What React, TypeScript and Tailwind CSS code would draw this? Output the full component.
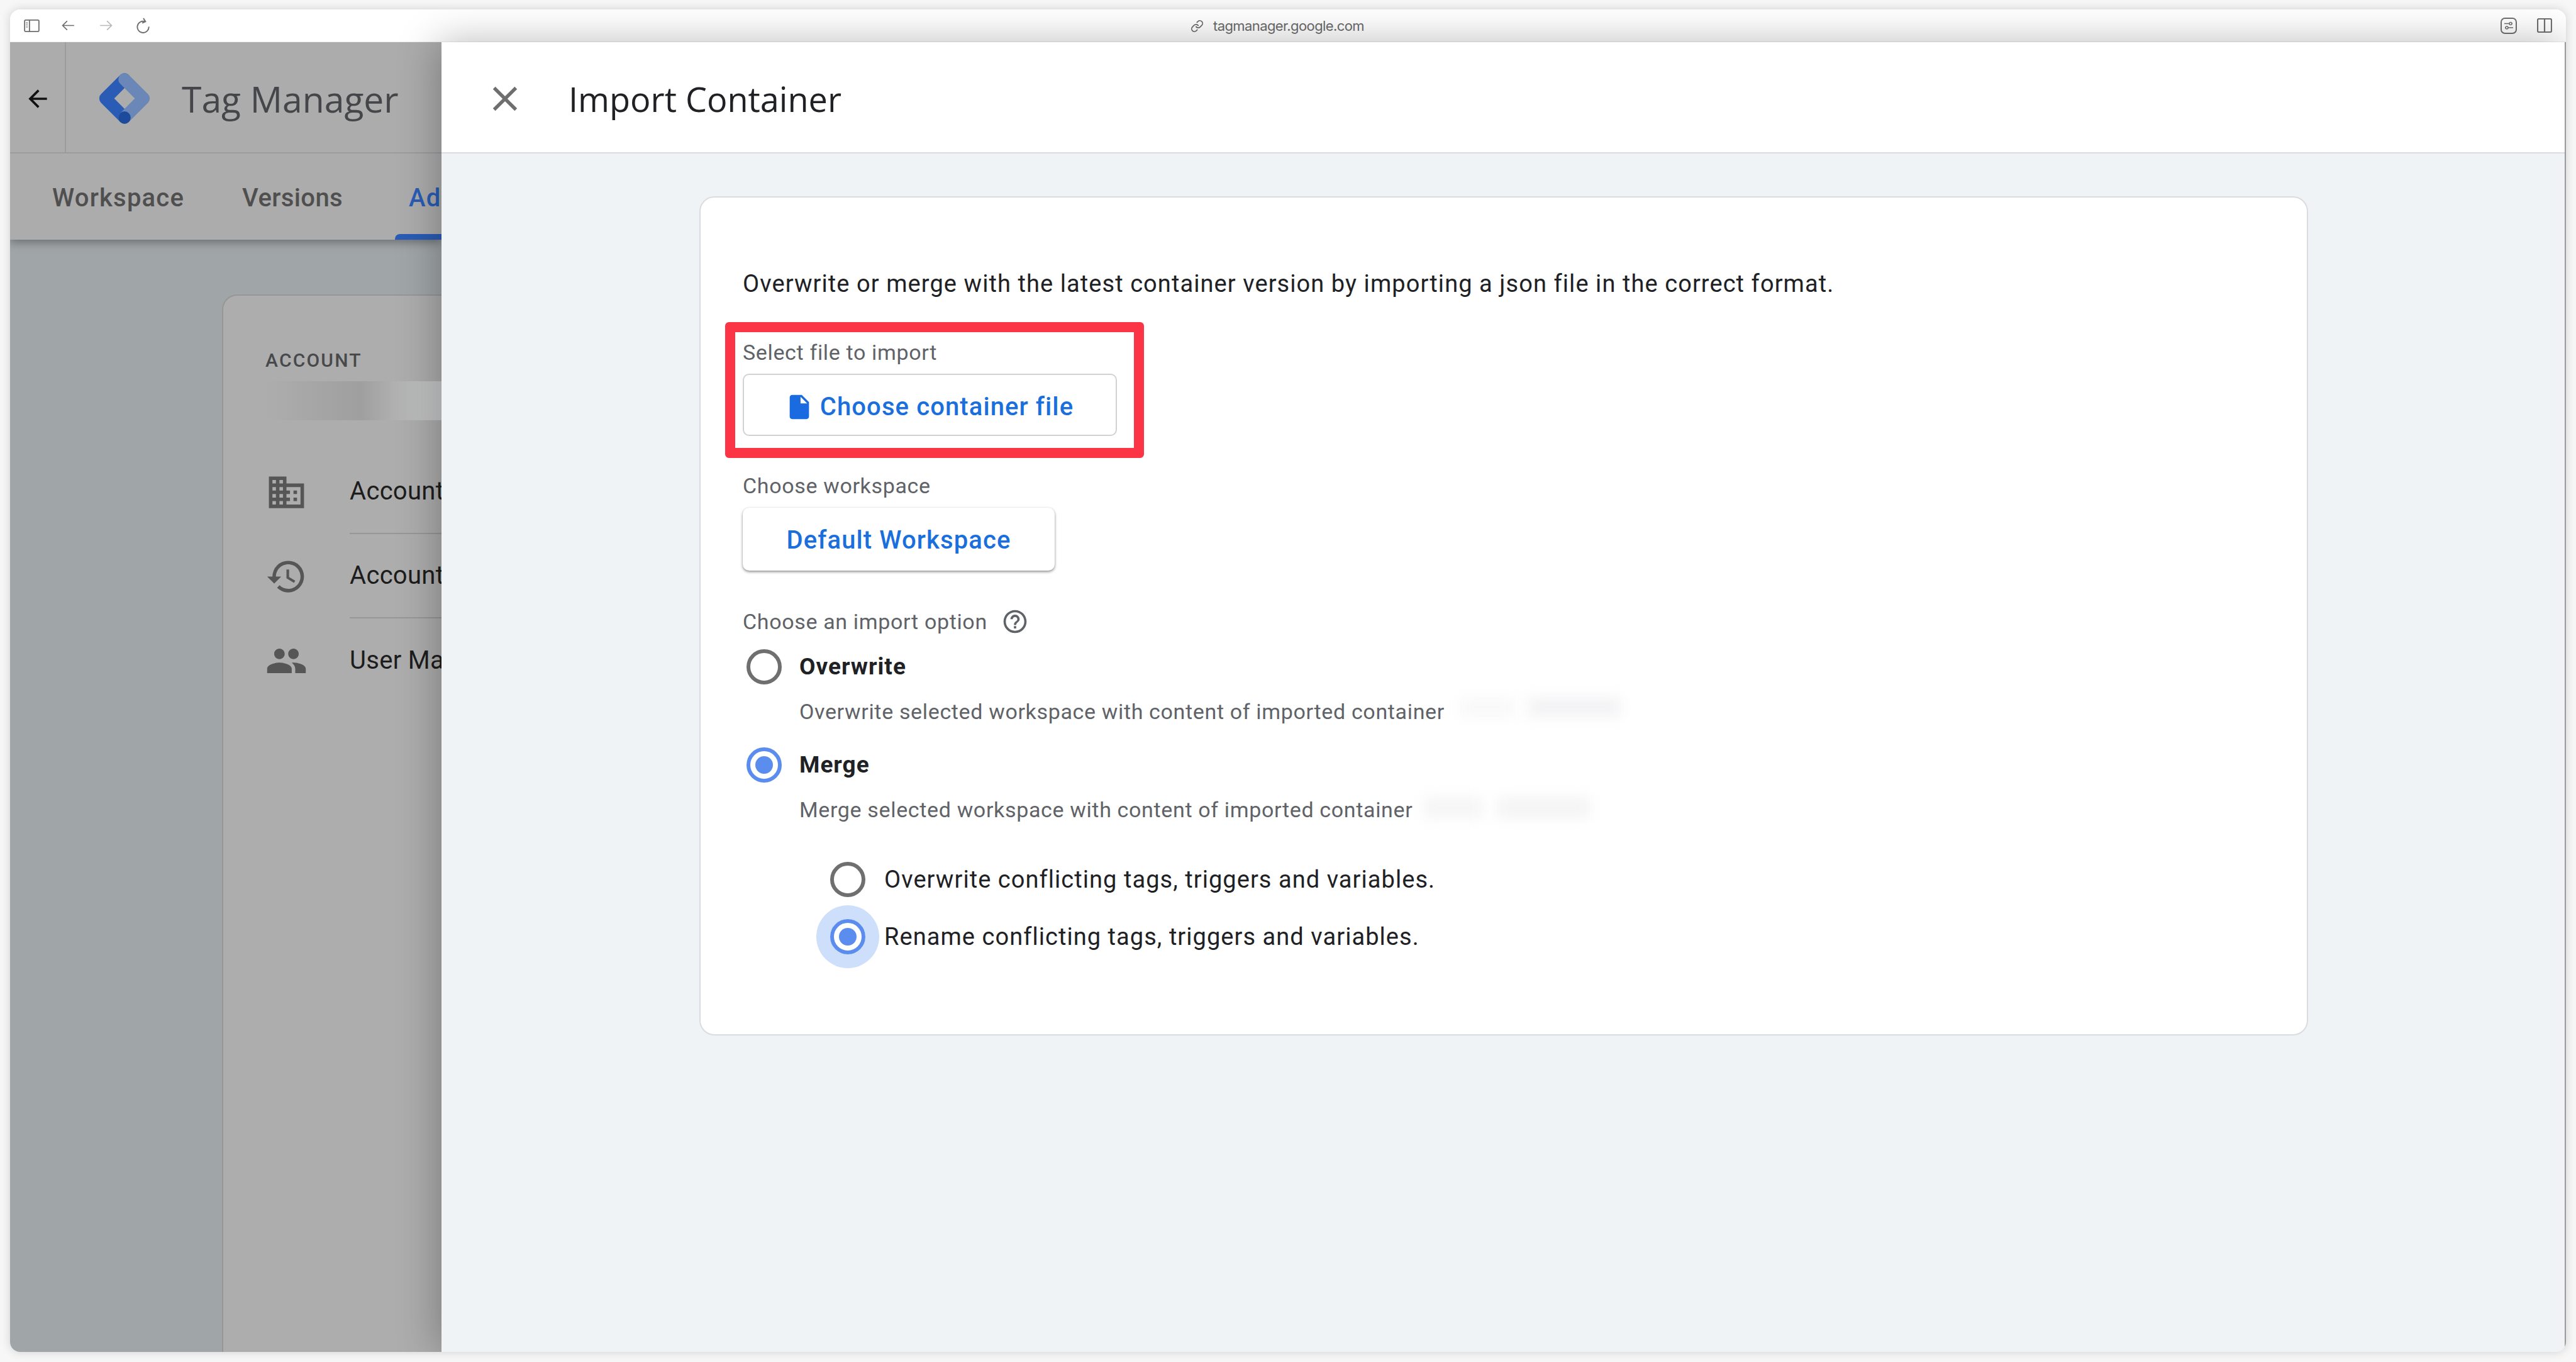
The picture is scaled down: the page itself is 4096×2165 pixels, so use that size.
import { Link as LinkIcon } from 'lucide-react'
import { MdArrowBack, MdClose, MdDomain, MdHelpOutline, MdHistory, MdInsertDriveFile, MdPeople } from 'react-icons/md'

const accountRows = [
  { label: 'Account Settings', Icon: MdDomain },
  { label: 'Account Activity', Icon: MdHistory },
  { label: 'User Management', Icon: MdPeople },
]

function BrowserBar() {
  return (
    <div className="flex h-[52px] shrink-0 items-center border-b border-[#efefef] bg-white">
      <div className="flex w-[900px] items-center text-[#6e6e6e]">
        <svg className="ml-[22px] h-[20px] w-[25px]" viewBox="0 0 27 22" fill="none" stroke="currentColor" strokeWidth="2">
          <rect x="1" y="1" width="25" height="20" rx="2" />
          <path d="M9.500 1v20" />
          <path d="M3.500 6h3M3.500 9.500h3M3.500 13h3" strokeWidth="1.500" />
        </svg>
        <svg className="ml-[35px] h-[17px] w-[21px]" viewBox="0 0 24 20" fill="none" stroke="currentColor" strokeWidth="2">
          <path d="M23 10H2M10 1.500 1.500 10 10 18.500" />
        </svg>
        <svg className="ml-[39px] h-[17px] w-[21px] text-[#b9b9b9]" viewBox="0 0 24 20" fill="none" stroke="currentColor" strokeWidth="2">
          <path d="M1 10h21M14 1.500 22.500 10 14 18.500" />
        </svg>
        <svg className="ml-[38px] h-[25px] w-[22px]" viewBox="0 0 22 26" fill="none" stroke="currentColor" strokeWidth="2">
          <path d="M13.500 6.500A9.500 9.500 0 1 0 20 15M11 1l3.500 5.500L9 9" />
        </svg>
      </div>
      <div className="ml-[977px] flex items-center pt-[1px] text-[#6b6b6b]">
        <LinkIcon className="h-[21px] w-[21px]" strokeWidth={2} />
        <span className="ml-[15px] font-['Inter',sans-serif] text-[22px] leading-none tracking-[-0.6px]">tagmanager.google.com</span>
      </div>
      <div className="ml-auto mr-[22px] flex items-center text-[#707070]">
        <svg className="h-[26px] w-[26px]" viewBox="0 0 26 26" fill="none" stroke="currentColor" strokeWidth="2">
          <rect x="1" y="1" width="24" height="24" rx="6" />
          <path d="M6 9.500h13M7 16h13" strokeWidth="1.500" />
          <circle cx="16" cy="9.500" r="2" fill="white" strokeWidth="1.500" />
          <circle cx="10" cy="16" r="2" fill="white" strokeWidth="1.500" />
        </svg>
        <svg className="ml-[32px] h-[23px] w-[24px]" viewBox="0 0 24 23" fill="none" stroke="currentColor" strokeWidth="2.200">
          <rect x="1" y="1" width="22" height="21" rx="2" />
          <path d="M12 1v21" />
        </svg>
      </div>
    </div>
  )
}

function TagManagerLogo() {
  return (
    <svg className="h-[83px] w-[82px]" viewBox="0 0 100 100" fill="none" strokeWidth="24" strokeLinecap="round" strokeLinejoin="round">
      <path d="M50 13 13 50 50 87" stroke="#2a5cb5" />
      <path d="M50 87 87 50 50 13" stroke="#6b87b7" />
      <circle cx="50" cy="87" r="12" fill="#1c4b9b" />
    </svg>
  )
}

function BackgroundPage() {
  return (
    <div className="flex w-[686px] shrink-0 flex-col overflow-hidden bg-[#a0a5a8]">
      <div className="relative z-10 shadow-[0_4px_14px_rgba(0,0,0,0.35)]">
        <div className="flex h-[177px] items-center border-b-[2px] border-[#9b9ba0] bg-[#acacac]">
          <div className="flex h-full w-[89px] shrink-0 items-center justify-center border-r-[2px] border-[#9b9ba0] pl-[1px] pt-[5px]">
            <MdArrowBack className="h-[44px] w-[44px] text-[#111]" />
          </div>
          <div className="ml-[52px] pt-[4px]"><TagManagerLogo /></div>
          <span className="ml-[50px] whitespace-nowrap pt-[5px] font-['Open_Sans',sans-serif] text-[57px] leading-none text-[#44464a]">Tag Manager</span>
        </div>
        <div className="flex h-[137px] bg-[#acacac] pl-[67px] font-['Roboto',sans-serif] text-[40px] font-medium tracking-[1.2px] text-[#4f4f4f]">
          <span className="self-center pt-[4px]">Workspace</span>
          <span className="ml-[92px] self-center pt-[4px] tracking-[0.4px]">Versions</span>
          <div className="relative ml-[105px] flex items-center pt-[4px] text-[#2a5cb5]">
            <span>Admin</span>
            <span className="absolute -left-[22px] -right-[22px] bottom-0 h-[9px] rounded-t-[8px] bg-[#2a5cb5]" />
          </div>
        </div>
      </div>
      <div className="ml-[337px] mt-[87px] flex-1 overflow-hidden rounded-tl-[24px] border-l-[2px] border-t-[2px] border-[#969696] bg-[#adadad] pl-[69px] pt-[85px] font-['Roboto',sans-serif]">
        <p className="-ml-[2px] text-[30px] font-medium leading-[36px] tracking-[2.2px] text-[#48494b]">ACCOUNT</p>
        <div className="mt-[15px] h-[62px] w-[300px] bg-gradient-to-r from-[#adadad] via-[#9f9f9f] to-[#cfd0d1]" />
        <div className="mt-[47px]">
          {accountRows.map(({ label, Icon }, i) => (
            <div key={label} className="flex h-[134px] items-center">
              <Icon className="-ml-[2px] h-[67px] w-[67px] shrink-0 text-[#565656]" />
              <div className={`ml-[67px] flex h-full flex-1 items-center pb-[1px] ${i < 2 ? 'border-b-[2px] border-[#979797]' : ''}`}>
                <span className="whitespace-nowrap text-[40px] tracking-[0.3px] text-[#1d1d1d]">{label}</span>
              </div>
            </div>
          ))}
        </div>
      </div>
    </div>
  )
}

function Radio({ checked }: { checked?: boolean }) {
  return (
    <span className={`flex h-[56px] w-[56px] shrink-0 items-center justify-center rounded-full border-[6px] ${checked ? 'border-[#5b8def]' : 'border-[#6f6f6f]'}`}>
      {checked && <span className="h-[28px] w-[28px] rounded-full bg-[#5b8def]" />}
    </span>
  )
}

function ImportPanel() {
  return (
    <div className="relative z-20 flex flex-1 flex-col border-r-[2px] border-[#9a9a9a] bg-[#eff3f6] shadow-[-6px_0_60px_rgba(0,0,0,0.28)]">
      <div className="flex h-[177px] shrink-0 items-center border-b-[2px] border-[#dadce0] bg-white pt-[5px]">
        <MdClose className="ml-[68px] h-[66px] w-[66px] text-[#6e6e6e]" />
        <h1 className="ml-[68px] font-['Open_Sans',sans-serif] text-[54px] leading-none text-[#202124]">Import Container</h1>
      </div>
      <div className="ml-[410px] mt-[68px] h-[1334px] w-[2558px] rounded-[24px] border-[2px] border-[#d9dde1] bg-white pl-[67px] font-['Roboto',sans-serif]">
        <p className="mt-[117px] text-[38px] leading-[40px] tracking-[1.07px] text-[#202124]">
          Overwrite or merge with the latest container version by importing a json file in the correct format.
        </p>

        <div className="relative">
          <p className="mt-[69px] text-[34px] leading-[40px] tracking-[0.65px] text-[#5f6368]">Select file to import</p>
          <div className="mt-[14px] flex h-[99px] w-[595px] items-center justify-center rounded-[10px] border-[2px] border-[#d2d2d2] pr-[2px] pt-[6px] text-[40px] font-medium tracking-[1.1px] text-[#1a6fdd]">
            <MdInsertDriveFile className="h-[46px] w-[46px] text-[#1a6bdf]" />
            <span className="ml-[10px]">Choose container file</span>
          </div>
          <div className="absolute -left-[28px] -top-[28px] h-[216px] w-[666px] rounded-[6px] border-[16px] border-[#fb3545]" />
        </div>

        <p className="mt-[59px] text-[34px] leading-[40px] tracking-[0.65px] text-[#5f6368]">Choose workspace</p>
        <div className="mt-[15px] flex h-[100px] w-[496px] items-center justify-center rounded-[10px] bg-white pt-[4px] text-[40px] font-medium tracking-[1.1px] text-[#1a6fdd] shadow-[0_2px_4px_rgba(0,0,0,0.45),0_0_2px_rgba(0,0,0,0.06)]">
          Default Workspace
        </div>

        <div className="mt-[61px] flex h-[40px] items-center">
          <span className="text-[34px] tracking-[0.65px] text-[#5f6368]">Choose an import option</span>
          <MdHelpOutline className="ml-[22px] h-[44px] w-[44px] text-[#5f6368]" />
        </div>

        <div className="mt-[20px] flex h-[64px] items-center pl-[6px]">
          <Radio />
          <span className="ml-[28px] text-[37px] font-bold tracking-[1px] text-[#202124]">Overwrite</span>
        </div>
        <div className="mt-[19px] flex h-[40px] items-center pl-[90px] text-[34px] tracking-[0.65px] text-[#5f6368]">
          <span>Overwrite selected workspace with content of imported container</span>
          <span className="mb-[14px] ml-[24px] h-[32px] w-[88px] bg-[#f9f9fa] blur-[10px]" />
          <span className="mb-[14px] ml-[22px] h-[32px] w-[146px] bg-[#f3f3f5] blur-[10px]" />
        </div>

        <div className="mt-[33px] flex h-[64px] items-center pl-[6px]">
          <Radio checked />
          <span className="ml-[28px] text-[37px] font-bold tracking-[1px] text-[#202124]">Merge</span>
        </div>
        <div className="mt-[19px] flex h-[40px] items-center pl-[90px] text-[34px] tracking-[0.65px] text-[#5f6368]">
          <span>Merge selected workspace with content of imported container</span>
          <span className="mb-[6px] ml-[18px] h-[36px] w-[94px] bg-[#f6f6f7] blur-[10px]" />
          <span className="mb-[6px] ml-[22px] h-[36px] w-[148px] bg-[#f5f5f6] blur-[10px]" />
        </div>

        <div className="mt-[59px] flex h-[64px] items-center pl-[139px]">
          <Radio />
          <span className="ml-[30px] text-[38px] tracking-[1.05px] text-[#202124]">Overwrite conflicting tags, triggers and variables.</span>
        </div>
        <div className="mt-[27px] flex h-[64px] items-center pl-[139px]">
          <span className="rounded-full shadow-[0_0_0_22px_#cddffb]"><Radio checked /></span>
          <span className="relative ml-[30px] text-[38px] tracking-[1.05px] text-[#202124]">Rename conflicting tags, triggers and variables.</span>
        </div>
      </div>
    </div>
  )
}

export default function App() {
  return (
    <div className="h-[2165px] w-[4096px] overflow-hidden bg-[#f7f7f7] pl-[16px] pt-[15px]">
      <div className="flex h-[2134px] w-[4064px] flex-col overflow-hidden rounded-[16px] shadow-[0_0_16px_rgba(0,0,0,0.16)]">
        <BrowserBar />
        <div className="flex min-h-0 flex-1">
          <BackgroundPage />
          <ImportPanel />
        </div>
      </div>
    </div>
  )
}
